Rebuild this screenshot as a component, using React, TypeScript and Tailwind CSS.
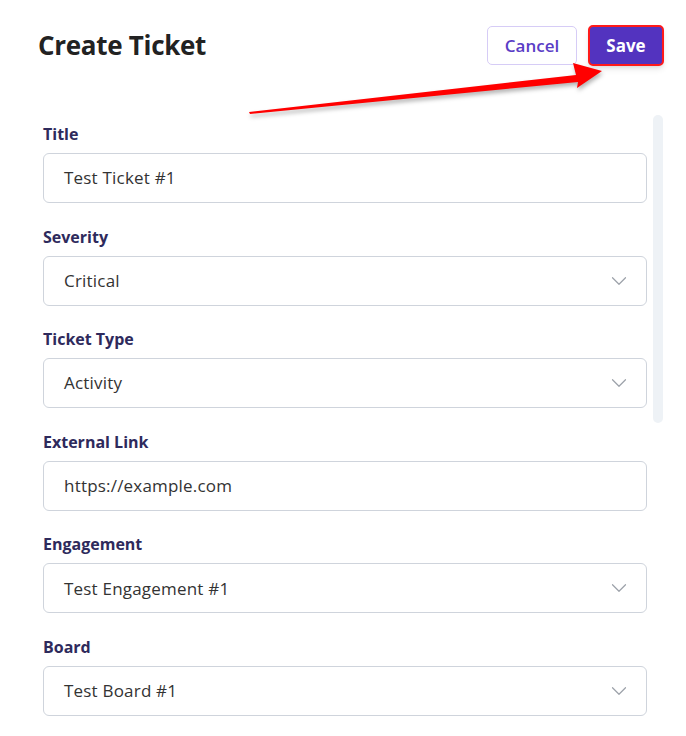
import { ChevronDown } from "lucide-react";

type Field = {
  label: string;
  value: string;
  select?: boolean;
};

const fields: Field[] = [
  { label: "Title", value: "Test Ticket #1" },
  { label: "Severity", value: "Critical", select: true },
  { label: "Ticket Type", value: "Activity", select: true },
  { label: "External Link", value: "https://example.com" },
  { label: "Engagement", value: "Test Engagement #1", select: true },
  { label: "Board", value: "Test Board #1", select: true },
];

function FormField({ field }: { field: Field }) {
  return (
    <div className="flex flex-col">
      <label className="mb-[7px] text-[16px] leading-6 font-bold text-[#2e2a5c]">{field.label}</label>
      <div className="flex h-[50px] items-center justify-between rounded-[6px] border border-[#cfd4dc] bg-white pl-[20px] pr-[14px]">
        <span className="text-[17px] tracking-[0.2px] text-[#333333]">{field.value}</span>
        {field.select && <ChevronDown className="h-[26px] w-[26px] text-[#9ca1a9]" strokeWidth={1.1} aria-hidden />}
      </div>
    </div>
  );
}

export default function App() {
  return (
    <div className="relative h-[736px] w-[686px] overflow-hidden bg-white font-['Open_Sans',sans-serif]">
      {/* Header */}
      <div className="flex items-center justify-between pl-[38px] pr-[22px] pt-[25px]">
        <h1 className="text-[26px] font-bold tracking-[-0.3px] text-[#222222]">Create Ticket</h1>
        <div className="flex items-center gap-[11px]">
          <button
            type="button"
            className="h-[39px] w-[90px] rounded-[5px] border border-[#d6ccf6] bg-white text-[17px] font-semibold text-[#5a3dc6]"
          >
            Cancel
          </button>
          <button
            type="button"
            className="h-[41px] w-[76px] rounded-[5px] border-2 border-[#ff1a1a] bg-[#5333bf] text-[17px] font-bold text-white shadow-md"
          >
            Save
          </button>
        </div>
      </div>

      {/* Form + scrollbar */}
      <div className="mt-[49px] flex">
        <div className="ml-[43px] flex w-[604px] flex-col gap-[21.6px] pt-[7px]">
          {fields.map((f) => (
            <FormField key={f.label} field={f} />
          ))}
        </div>
        <div className="ml-[6px] h-[308px] w-[10px] rounded-full bg-[#eef2f6]" />
      </div>

      {/* Annotation arrow */}
      <svg
        className="pointer-events-none absolute left-0 top-0"
        width="686"
        height="736"
        style={{ filter: "drop-shadow(1px 3px 2px rgba(0,0,0,0.3))" }}
      >
        <polygon points="249,112 576,75 573,63 602,71 577,88 578,82 250,114" fill="#ff0000" />
      </svg>
    </div>
  );
}
